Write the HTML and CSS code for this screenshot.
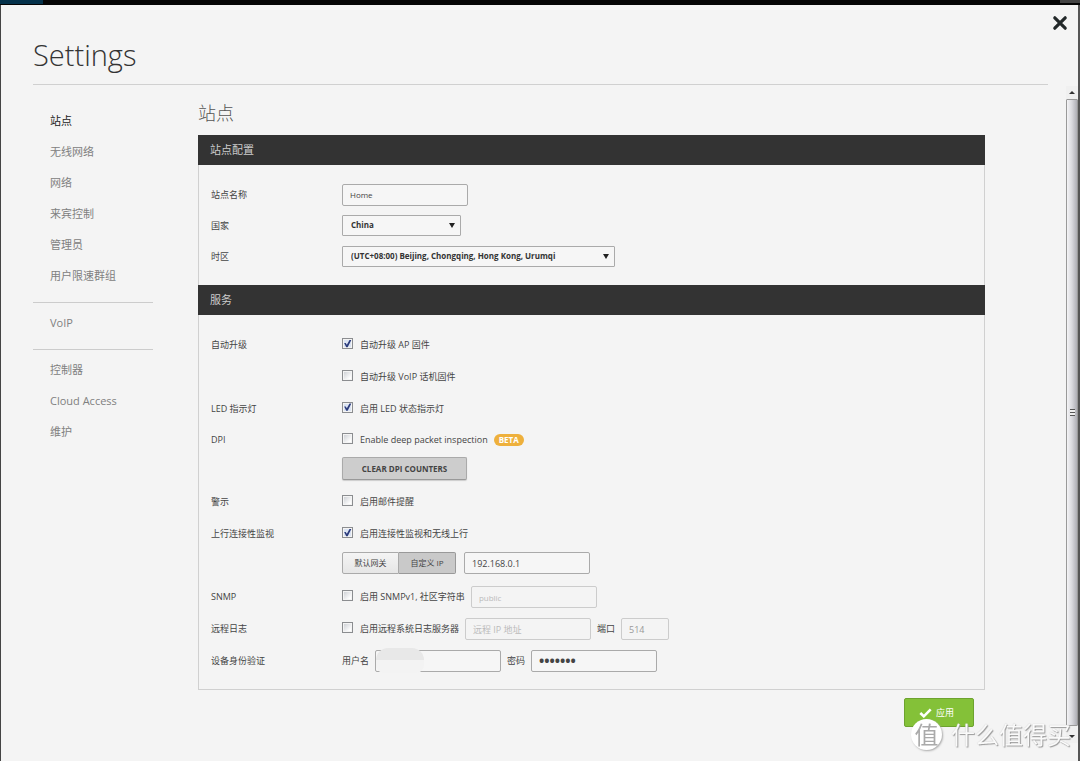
FILE: index.html
```html
<!DOCTYPE html>
<html lang="zh-CN">
<head>
<meta charset="utf-8">
<meta name="viewport" content="width=device-width, initial-scale=1">
<title>Settings</title>
<link rel="stylesheet" href="styles.css">
</head>
<body>
<div class="backdrop"><span class="backdrop-tab"></span><span class="backdrop-end"></span></div>
<div class="dialog">
  <header class="dialog-head">
    <h1>Settings</h1>
    <button class="close" type="button" aria-label="Close">
      <svg width="16" height="16" viewBox="0 0 16 16"><path d="M2.8 2.8 13.2 13.2M13.2 2.8 2.8 13.2" stroke="#222829" stroke-width="3.2" stroke-linecap="round"/></svg>
    </button>
  </header>
  <div class="dialog-body">
    <nav class="side">
      <ul>
        <li><a class="active" href="#site">站点</a></li>
        <li><a href="#wireless">无线网络</a></li>
        <li><a href="#networks">网络</a></li>
        <li><a href="#guest">来宾控制</a></li>
        <li><a href="#admins">管理员</a></li>
        <li><a href="#groups">用户限速群组</a></li>
      </ul>
      <ul>
        <li><a href="#voip">VoIP</a></li>
      </ul>
      <ul>
        <li><a href="#controller">控制器</a></li>
        <li><a href="#cloud">Cloud Access</a></li>
        <li><a href="#maintenance">维护</a></li>
      </ul>
    </nav>
    <main class="content">
      <h2>站点</h2>
      <form>
        <div class="panel">
          <h3>站点配置</h3>
          <div class="fields">
            <div class="row"><label class="name" for="site-name">站点名称</label><div class="value"><input class="text small" id="site-name" type="text" value="Home"></div></div>
            <div class="row"><label class="name" for="country">国家</label><div class="value"><span class="select short"><select id="country"><option>China</option></select></span></div></div>
            <div class="row"><label class="name" for="zone">时区</label><div class="value"><span class="select long"><select id="zone"><option>(UTC+08:00) Beijing, Chongqing, Hong Kong, Urumqi</option></select></span></div></div>
          </div>
          <h3>服务</h3>
          <div class="fields">
            <div class="row tall"><span class="name">自动升级</span><div class="value"><label class="check"><input type="checkbox" checked>自动升级 AP 固件</label></div></div>
            <div class="row tall"><span class="name"></span><div class="value"><label class="check"><input type="checkbox">自动升级 VoIP 话机固件</label></div></div>
            <div class="row"><span class="name">LED 指示灯</span><div class="value"><label class="check"><input type="checkbox" checked>启用 LED 状态指示灯</label></div></div>
            <div class="row"><span class="name">DPI</span><div class="value"><label class="check"><input type="checkbox">Enable deep packet inspection</label><span class="beta">BETA</span></div></div>
            <div class="row sub"><span class="name"></span><div class="value"><button class="clear" type="button">CLEAR DPI COUNTERS</button></div></div>
            <div class="row tall"><span class="name">警示</span><div class="value"><label class="check"><input type="checkbox">启用邮件提醒</label></div></div>
            <div class="row tall"><span class="name">上行连接性监视</span><div class="value"><label class="check"><input type="checkbox" checked>启用连接性监视和无线上行</label></div></div>
            <div class="row sub"><span class="name"></span><div class="value"><div class="toggle"><button type="button" aria-pressed="false">默认网关</button><button type="button" aria-pressed="true">自定义 IP</button></div><input class="text" type="text" value="192.168.0.1" aria-label="自定义 IP"></div></div>
            <div class="row tall"><span class="name">SNMP</span><div class="value"><label class="check"><input type="checkbox">启用 SNMPv1, 社区字符串</label><input class="text small" type="text" placeholder="public" aria-label="社区字符串" disabled></div></div>
            <div class="row tall"><span class="name">远程日志</span><div class="value"><label class="check"><input type="checkbox">启用远程系统日志服务器</label><input class="text" type="text" placeholder="远程 IP 地址" aria-label="远程 IP 地址" disabled><label for="port">端口</label><input class="text port" id="port" type="text" value="514" disabled></div></div>
            <div class="row"><span class="name">设备身份验证</span><div class="value"><label for="user">用户名</label><span class="masked"><input class="text" id="user" type="text"></span><label for="pass">密码</label><input class="text password" id="pass" type="password" value="1234567"></div></div>
          </div>
        </div>
        <div class="actions">
          <button class="apply" type="submit"><svg width="13" height="10" viewBox="0 0 13 10"><path d="M1.3 5 4.8 8.3 11.7 1.3" fill="none" stroke="#fff" stroke-width="2.6"/></svg>应用</button>
        </div>
      </form>
    </main>
    <div class="scroll" aria-hidden="true">
      <svg class="arrow" viewBox="0 0 6 3"><path d="M0 3 3 0 6 3z" fill="#333"/></svg>
      <div class="thumb"><span class="grip"></span></div>
      <svg class="arrow" viewBox="0 0 6 3"><path d="M0 0 3 3 6 0z" fill="#333"/></svg>
    </div>
  </div>
</div>
<div class="watermark"><span class="seal">值</span><span>什么值得买</span></div>
</body>
</html>
```
FILE: styles.css
```css
* { box-sizing: border-box; }
body {
  margin: 0;
  min-height: 100vh;
  display: flex;
  flex-direction: column;
  background: #f4f4f4;
  color: #444;
  font: 9px/16px "Open Sans", "Noto Sans CJK SC", sans-serif;
}
button, input, select { font: inherit; color: inherit; margin: 0; }
h1, h2, h3, ul { margin: 0; padding: 0; font-weight: 400; }

.backdrop { display: flex; justify-content: space-between; height: 5px; background: #050505; }
.backdrop-tab { width: 43px; background: #04314a; border-bottom: 1px solid #050505; }
.backdrop-end { width: 20px; height: 3px; background: #444; }

.dialog {
  flex: 1;
  display: flex;
  flex-direction: column;
  border-left: 1px solid #444;
  border-right: 2px solid #555;
}
.dialog-head {
  display: flex;
  justify-content: space-between;
  align-items: flex-start;
  height: 80px;
  margin: 0 30px 0 32px;
  border-bottom: 1px solid #d0d0d0;
}
h1 { padding-top: 30px; font-size: 29px; line-height: 40px; font-weight: 300; color: #333; }
.close { margin: 10px -20px 0 0; padding: 0; border: 0; background: none; line-height: 0; }

.dialog-body { flex: 1; display: flex; }
.side { flex: 0 0 120px; margin-left: 32px; padding-top: 20px; font-size: 11px; }
.side ul { list-style: none; }
.side ul + ul { margin-top: 11px; padding-top: 4px; border-top: 1px solid #ccc; }
.side a { display: block; padding-left: 17px; line-height: 31px; color: #808080; text-decoration: none; }
.side .active { color: #222; }

.content { flex: 1; min-width: 0; margin: 0 81px 0 45px; padding-top: 16px; }
h2 { margin-bottom: 10px; font-size: 18px; line-height: 24px; font-weight: 300; color: #555; }
.panel { border: 1px solid #d0d0d0; border-top: 0; }
h3 { margin: 0 -1px; padding: 0 12px; background: #333; color: #ccc; font-size: 11px; line-height: 30px; }
.fields { padding: 14px 12px 13px; }
.row { display: grid; grid-template-columns: 131px 1fr; height: 31px; align-items: center; }
.row.tall { height: 32px; }
.row.sub { align-items: start; }
.row.sub .value { padding-top: 2px; }
.value { display: flex; align-items: center; gap: 6px; }

.text {
  width: 126px;
  height: 22px;
  padding: 0 7px;
  background: #f6f6f6;
  border: 1px solid #aaa;
  border-radius: 2px;
}
.text.small { font-size: 8px; }
.text.port { width: 48px; }
.text:disabled { border-color: #ccc; color: #999; background: #f4f4f4; }
.text::placeholder { color: #bbb; opacity: 1; }
.text.password { font-size: 14px; font-weight: 700; }

.select { position: relative; height: 22px; }
.select::after {
  content: "";
  position: absolute;
  right: 6px;
  top: 8px;
  border: 3px solid transparent;
  border-top: 5px solid #222;
  border-bottom: 0;
  pointer-events: none;
}
.select select {
  appearance: none;
  width: 100%;
  height: 21px;
  padding: 0 8px;
  border: 1px solid #aaa;
  border-radius: 1px;
  background: #f6f6f6;
  color: #333;
  font-size: 8px;
  font-weight: 700;
}
.select.short { width: 119px; }
.select.long { width: 273px; }

.check { display: flex; align-items: center; gap: 7px; }
.check input {
  appearance: none;
  display: grid;
  place-items: center;
  width: 11px;
  height: 11px;
  margin-bottom: 3px;
  border: 1px solid #8b8d90;
  background: linear-gradient(135deg, #c8cbd0, #fff 80%);
  box-shadow: inset 0 0 0 1px #f4f4f4;
}
.check input:checked { background: #dbe4f3; }
.check input:checked::after {
  content: "";
  width: 8px;
  height: 8px;
  background: #2c3c7c;
  clip-path: polygon(8% 45%, 28% 45%, 42% 65%, 75% 5%, 98% 5%, 52% 98%, 34% 98%);
}
.beta { padding: 0 5px; border-radius: 6px; background: #eeb03c; color: #fff; font-size: 8px; line-height: 12px; font-weight: 700; }
.clear {
  width: 125px;
  height: 23px;
  padding: 0;
  border: 1px solid #aaa;
  border-bottom-color: #999;
  border-radius: 2px;
  background: #cdcdcd;
  box-shadow: 0 1px 1px #ccc;
  font-size: 8px;
  font-weight: 700;
}
.toggle { display: flex; margin-right: 2px; }
.toggle button {
  width: 57px;
  height: 22px;
  padding: 0;
  border: 1px solid #aaa;
  border-radius: 2px 0 0 2px;
  background: linear-gradient(#f4f4f4, #e6e6e6);
  font-size: 8px;
}
.toggle button[aria-pressed="true"] { border-color: #999; border-left: 0; border-radius: 0 2px 2px 0; background: #c9c9c9; }

.masked { position: relative; }
.masked::after {
  content: "";
  position: absolute;
  left: 1px;
  top: -2px;
  width: 48px;
  height: 25px;
  border-radius: 12px 12px 8px 8px;
  background: linear-gradient(#e8e8e8 12px, #f3f3f3 12px);
}

.actions { display: flex; justify-content: flex-end; padding: 8px 11px 16px; }
.apply {
  display: flex;
  align-items: center;
  justify-content: center;
  gap: 4px;
  width: 70px;
  height: 29px;
  padding: 0 5px 0 0;
  border: 1px solid #6da32f;
  border-radius: 2px;
  background: #84c138;
  color: #fff;
}

.scroll {
  flex: 0 0 12px;
  display: flex;
  flex-direction: column;
  align-items: center;
  margin: 1px 0 18px;
  background: #f0f0f0;
}
.arrow { width: 6px; height: 3px; margin: 5px 0; }
.thumb {
  flex: 1;
  display: grid;
  place-items: center;
  width: 12px;
  margin-bottom: 4px;
  border: 1px solid #999;
  border-radius: 1px;
  background: linear-gradient(90deg, #f4f4f6, #d8d8dd 50%, #aeaeb4);
}
.grip { width: 5px; height: 7px; background: repeating-linear-gradient(#555 0 1px, #eee 1px 3px); }

.watermark {
  position: fixed;
  right: 9px;
  bottom: 10px;
  display: flex;
  align-items: center;
  gap: 9px;
  color: #fafafa;
  font: 24px/34px "Noto Sans CJK SC", sans-serif;
  text-shadow: 1px 1px 1px #999, 0 0 1px #bbb;
  pointer-events: none;
}
.seal {
  width: 31px;
  height: 31px;
  border-radius: 50%;
  background: #fff;
  box-shadow: 1px 1px 2px #aaa;
  color: #aaa;
  line-height: 29px;
  text-align: center;
  text-shadow: none;
}
```
